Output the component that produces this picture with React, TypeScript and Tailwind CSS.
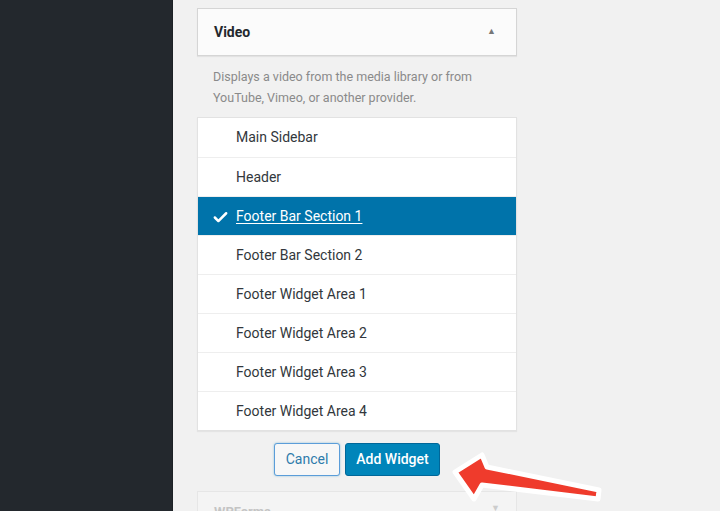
import { Check } from 'lucide-react';

const areas = [
  'Main Sidebar',
  'Header',
  'Footer Bar Section 1',
  'Footer Bar Section 2',
  'Footer Widget Area 1',
  'Footer Widget Area 2',
  'Footer Widget Area 3',
  'Footer Widget Area 4',
];

const selected = 'Footer Bar Section 1';

export default function App() {
  return (
    <div className="relative flex w-[720px] h-[511px] overflow-hidden font-['Roboto','Liberation_Sans',sans-serif]">
      {/* Admin sidebar */}
      <aside className="w-[173px] shrink-0 bg-[#23282d] border-r border-[#1d2125]" />

      <main className="flex-1 bg-[#f1f1f1] pl-[24px] pt-[8px]">
        <div className="w-[320px]">
          {/* Widget header */}
          <div className="flex h-[48px] items-center justify-between border border-[#d5d5d5] bg-[#fbfbfb] px-[16px] shadow-[0_1px_1px_rgba(0,0,0,0.06)]">
            <span className="text-[14px] font-bold text-[#23282d]">Video</span>
            <span className="mr-[4px] text-[9px] text-[#777]">▲</span>
          </div>

          <p className="mt-[10px] pl-[16px] pr-[20px] text-[12.5px] leading-[21px] text-[#8a8a8a]">
            Displays a video from the media library or from YouTube, Vimeo, or another provider.
          </p>

          {/* Sidebar chooser */}
          <ul className="mt-[9px] border border-[#e2e2e2] bg-white shadow-[0_1px_1px_rgba(0,0,0,0.05)]">
            {areas.map((area, i) => {
              const isSel = area === selected;
              return (
                <li
                  key={area}
                  className={
                    'relative flex h-[39px] items-center pl-[38px] text-[14px] ' +
                    (i > 0 ? 'border-t border-[#eeeeee] ' : '') +
                    (isSel ? 'bg-[#0073aa] text-white' : 'text-[#32373c]')
                  }
                >
                  {isSel && (
                    <Check size={17} strokeWidth={3.5} className="absolute left-[14px] top-[12px] text-white" />
                  )}
                  <span className={isSel ? 'underline underline-offset-2' : ''}>{area}</span>
                </li>
              );
            })}
          </ul>

          {/* Actions */}
          <div className="mt-[12px] flex justify-center gap-[5px]">
            <button className="h-[33px] w-[66px] rounded-[3px] border border-[#5b9dd9] bg-[#f7f7f7] text-[14px] text-[#2e7bab] shadow-[0_0_2px_rgba(30,140,190,0.5)]">
              Cancel
            </button>
            <button className="h-[33px] w-[95px] rounded-[3px] border border-[#006799] bg-[#0085ba] text-[14px] font-medium text-white">
              Add Widget
            </button>
          </div>

          {/* Next widget, faded */}
          <div className="mt-[15px] flex h-[40px] items-start justify-between border border-[#e6e6e6] bg-[#f4f4f4] px-[16px] pt-[10px]">
            <span className="text-[13px] font-bold text-[#c4c4c4]">WPForms</span>
            <span className="text-[9px] text-[#ccc]">▼</span>
          </div>
        </div>
      </main>

      {/* Annotation arrow */}
      <svg className="absolute left-0 top-0 pointer-events-none" width="720" height="511" viewBox="0 0 720 511">
        <polygon
          points="455,472 482,455 487,467 599,490 598,499 482,485 474,499"
          fill="#ef3b2c"
          stroke="#ffffff"
          strokeWidth="5"
          strokeLinejoin="round"
        />
      </svg>
    </div>
  );
}
